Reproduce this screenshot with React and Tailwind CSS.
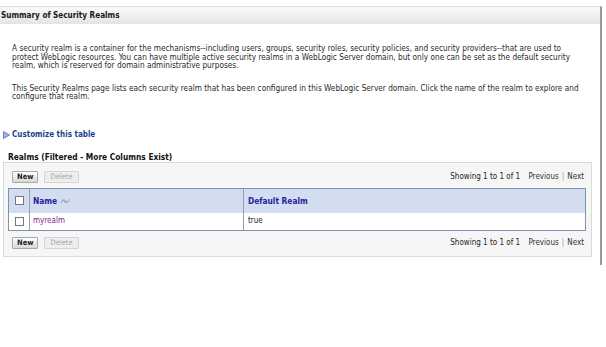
import React from 'react'

const font = { fontFamily: '"DejaVu Sans Condensed", "DejaVu Sans", sans-serif' }

function Btn({ children, disabled }) {
  return (
    <button
      type="button"
      className={
        disabled
          ? 'h-[12px] rounded-[1px] border border-[#d4d4d4] bg-[#eeeeee] px-[5px] text-[7.5px] leading-[10px] text-[#a8a8a8]'
          : 'h-[12px] rounded-[1px] border border-[#a8a8a8] bg-gradient-to-b from-[#ffffff] to-[#d8d8d8] px-[4px] text-[7.5px] leading-[10px] font-bold text-[#222]'
      }
    >
      {children}
    </button>
  )
}

function Toolbar() {
  return (
    <div className="flex h-[12px] items-center justify-between pl-[8px] pr-[7px]">
      <div className="flex gap-[6px]">
        <Btn>New</Btn>
        <Btn disabled>Delete</Btn>
      </div>
      <div className="whitespace-nowrap text-[8px] text-[#222]">
        Showing 1 to 1 of 1 <span className="ml-[6px] text-[#333]">Previous</span>
        <span className="mx-[3px] text-[#999]">|</span>
        <span className="text-[#333]">Next</span>
      </div>
    </div>
  )
}

function Check() {
  return <span className="block h-[9px] w-[9px] border border-[#777] bg-white" />
}

export default function App() {
  return (
    <div className="h-[347px] w-[606px] bg-white text-[#222]" style={font}>
      <div className="pt-[6px]">
        <div className="h-[259px] w-[602px] border-r-2 border-t border-r-[#9a9a9a] border-t-[#e0e0e0]">
          <div className="flex h-[17px] items-center bg-gradient-to-b from-[#fafafa] to-[#e4e4e4] pl-[1px] text-[8.1px] font-bold text-[#1a1a1a]">
            Summary of Security Realms
          </div>

          <div className="whitespace-nowrap pl-[12px] pt-[20px] text-[8.2px] leading-[8.6px] text-[#2a2a2a]">
            <p>
              A security realm is a container for the mechanisms--including users, groups, security roles, security
              policies, and security providers--that are used to
              <br />
              protect WebLogic resources. You can have multiple active security realms in a WebLogic Server domain, but
              only one can be set as the default security
              <br />
              realm, which is reserved for domain administrative purposes.
            </p>
            <p className="mt-[14px]">
              This Security Realms page lists each security realm that has been configured in this WebLogic Server
              domain. Click the name of the realm to explore and
              <br />
              configure that realm.
            </p>
          </div>

          <div className="mt-[29px] flex h-[10px] items-center gap-[2px] pl-[3px] text-[8px] font-bold text-[#1c3f8c]">
            <svg width="7" height="8" viewBox="0 0 7 8">
              <path d="M0.5 0.5 L6.5 4 L0.5 7.5 Z" fill="#9fb6dd" stroke="#4a6fb0" strokeWidth="0.8" />
            </svg>
            Customize this table
          </div>

          <div className="mt-[12px] flex h-[10px] items-center pl-[8px] text-[8.3px] font-bold text-[#111]">
            Realms (Filtered - More Columns Exist)
          </div>

          <div className="ml-[3px] w-[589px] border border-[#dadada] bg-[#f6f6f6] pb-[7px] pt-[8px]">
            <Toolbar />
            <div className="ml-[4px] mr-[5px] mt-[5px] border border-[#7f93b0]">
              <div className="flex h-[24px] bg-[#d2ddef]">
                <div className="flex w-[21px] items-center justify-center border-r border-[#8ea0bd]">
                  <Check />
                </div>
                <div className="flex w-[214px] items-center gap-[3px] border-r border-[#8ea0bd] pl-[3px] text-[8.3px] font-bold text-[#2424a0]">
                  Name
                  <svg width="10" height="6" viewBox="0 0 10 6">
                    <path d="M0.5 5 L3 1.5 L5.5 5 M4.5 1.5 L7 5 L9.5 1.5" fill="none" stroke="#8c9fc8" strokeWidth="1" />
                  </svg>
                </div>
                <div className="flex flex-1 items-center pl-[4px] text-[8.3px] font-bold text-[#2424a0]">
                  Default Realm
                </div>
              </div>
              <div className="flex h-[17px] bg-white text-[8px]">
                <div className="flex w-[21px] items-center justify-center border-r border-[#8ea0bd]">
                  <Check />
                </div>
                <div className="flex w-[214px] items-center border-r border-[#8ea0bd] pl-[3px] text-[#7a1f8a]">
                  myrealm
                </div>
                <div className="flex flex-1 items-center pl-[4px] text-[#222]">true</div>
              </div>
            </div>
            <div className="mt-[6px]">
              <Toolbar />
            </div>
          </div>
        </div>
      </div>
    </div>
  )
}
